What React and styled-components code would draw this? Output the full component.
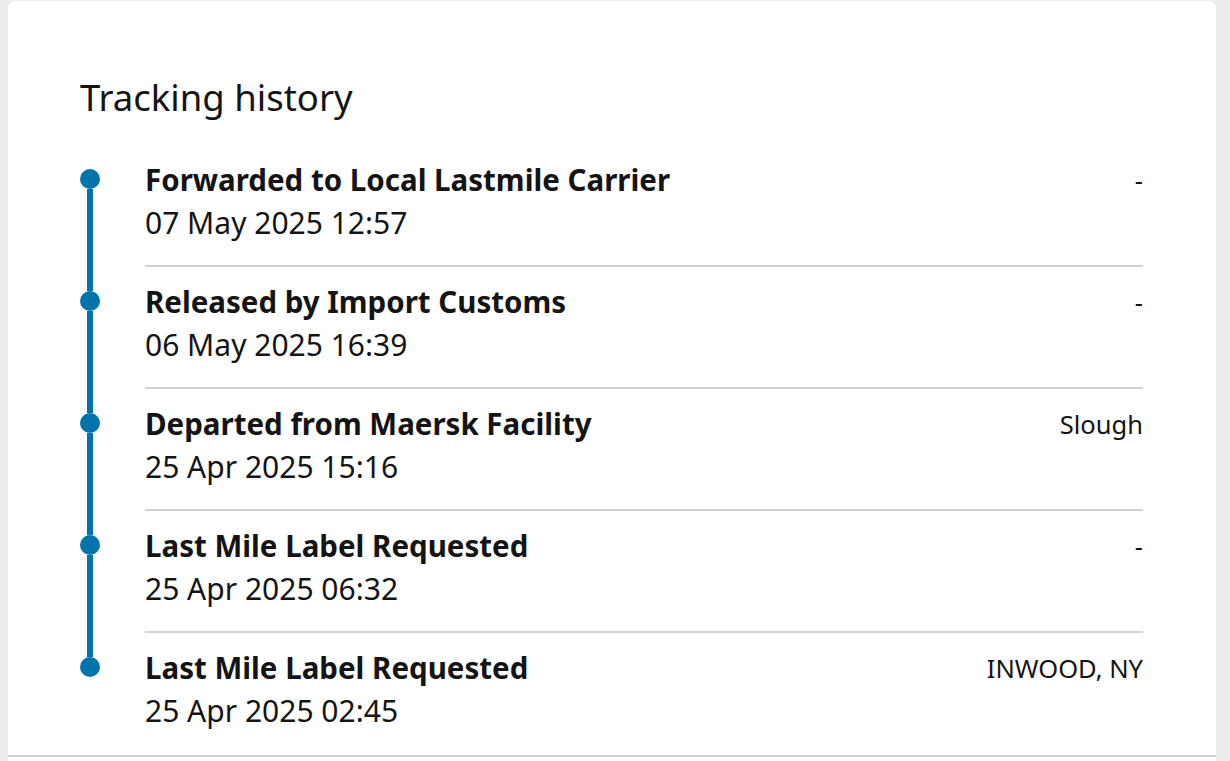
import React from 'react';
import styled, { createGlobalStyle } from 'styled-components';

const GlobalStyle = createGlobalStyle`
    html, body {
        margin: 0;
        padding: 0;
        background: #ececec;
        font-family: "Noto Sans", "Open Sans", sans-serif;
        color: #141414;
    }
`;

const Page = styled.div`
    padding: 1px 14px 0 8px;
`;

const Card = styled.section`
    background: #fff;
    border-radius: 8px 8px 0 0;
    min-height: 800px;
`;

const Body = styled.div`
    padding: 72px 73px 0 72px;
`;

const Heading = styled.h2`
    margin: 0 0 24px;
    font-size: 36.5px;
    line-height: 48px;
    font-weight: 400;
`;

const List = styled.ol`
    list-style: none;
    margin: 0;
    padding: 0;
`;

const Item = styled.li`
    display: grid;
    grid-template-columns: 20px 1fr;
    column-gap: 45px;
`;

const Track = styled.div`
    display: flex;
    flex-direction: column;
    align-items: center;
`;

const Segment = styled.span`
    width: 6px;
    background: ${p => (p.$hidden ? 'transparent' : '#0073ab')};
    height: ${p => (p.$grow ? 'auto' : '24px')};
    flex: ${p => (p.$grow ? '1' : 'none')};
`;

const Dot = styled.span`
    width: 20px;
    height: 20px;
    border-radius: 50%;
    background: #0073ab;
    flex: none;
`;

const Content = styled.div`
    display: flex;
    justify-content: space-between;
    align-items: flex-start;
    padding: 15px 0 22px;
    border-bottom: 2px solid ${p => (p.$last ? 'transparent' : '#d2d2d2')};
`;

const Title = styled.div`
    font-size: 29.5px;
    line-height: 40px;
    font-weight: 700;
`;

const When = styled.div`
    margin-top: 3px;
    font-size: 30px;
    line-height: 40px;
`;

const Place = styled.div`
    font-size: 25.5px;
    line-height: 40px;
    text-align: right;
`;

const Rule = styled.hr`
    margin: 0;
    border: 0;
    border-top: 2px solid #d2d2d2;
`;

const events = [
    { id: 1, title: 'Forwarded to Local Lastmile Carrier', date: '07 May 2025 12:57', place: '-' },
    { id: 2, title: 'Released by Import Customs', date: '06 May 2025 16:39', place: '-' },
    { id: 3, title: 'Departed from Maersk Facility', date: '25 Apr 2025 15:16', place: 'Slough' },
    { id: 4, title: 'Last Mile Label Requested', date: '25 Apr 2025 06:32', place: '-' },
    { id: 5, title: 'Last Mile Label Requested', date: '25 Apr 2025 02:45', place: 'INWOOD, NY' },
];

const App = () => (
    <Page>
        <GlobalStyle />
        <Card>
            <Body>
                <Heading>Tracking history</Heading>
                <List>
                    {events.map((ev, i) => {
                        const first = i === 0;
                        const last = i === events.length - 1;
                        return (
                            <Item key={ev.id}>
                                <Track>
                                    <Segment $hidden={first} />
                                    <Dot />
                                    <Segment $grow $hidden={last} />
                                </Track>
                                <Content $last={last}>
                                    <div>
                                        <Title>{ev.title}</Title>
                                        <When>{ev.date}</When>
                                    </div>
                                    <Place>{ev.place}</Place>
                                </Content>
                            </Item>
                        );
                    })}
                </List>
            </Body>
            <Rule />
        </Card>
    </Page>
);

export default App;
